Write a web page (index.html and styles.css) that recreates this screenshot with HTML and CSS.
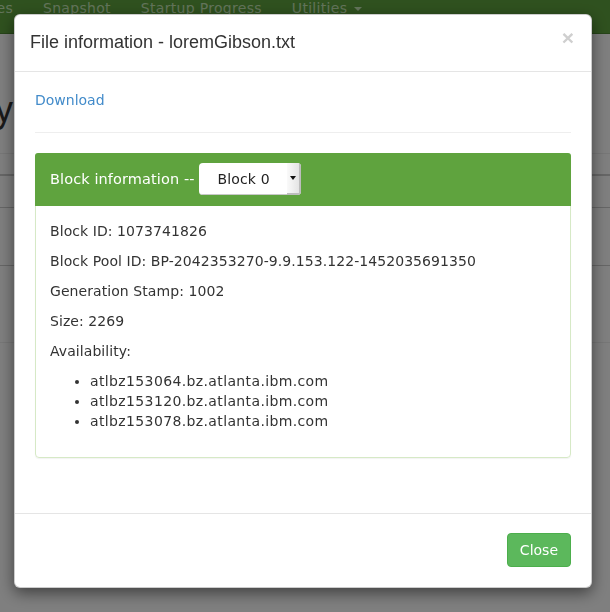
FILE: index.html
```html
<!DOCTYPE html>
<html>
<head>
<meta charset="utf-8">
<title>File information</title>
<link rel="stylesheet" href="styles.css">
</head>
<body>
<div class="page">
  <nav class="navbar">
    <div class="nav-clip"><a class="nav-link">Datanode Volume Failures</a></div>
    <a class="nav-link">Snapshot</a>
    <a class="nav-link">Startup Progress</a>
    <a class="nav-link">Utilities <span class="caret"></span></a>
  </nav>
  <div class="page-header">
    <div class="h1-clip"><h1>Browse Directory</h1></div>
  </div>
  <div class="bg-row row-a"></div>
  <div class="bg-row row-b"></div>
  <div class="bg-row row-c"></div>
  <div class="bg-row row-d"></div>
</div>

<div class="backdrop"></div>

<div class="modal">
  <div class="modal-header">
    <h4 class="modal-title">File information - loremGibson.txt</h4>
    <span class="close">&times;</span>
  </div>
  <div class="modal-body">
    <div class="download-row"><a class="link">Download</a></div>
    <hr class="sep">
    <div class="panel">
      <div class="panel-heading">
        <span class="panel-title">Block information --</span>
        <div class="select">
          <span class="select-text">Block 0</span>
          <span class="select-arrow"><span class="tri"></span></span>
        </div>
      </div>
      <div class="panel-body">
        <p>Block ID: 1073741826</p>
        <p>Block Pool ID: BP-2042353270-9.9.153.122-1452035691350</p>
        <p>Generation Stamp: 1002</p>
        <p>Size: 2269</p>
        <p>Availability:</p>
        <ul class="hosts">
          <li>atlbz153064.bz.atlanta.ibm.com</li>
          <li>atlbz153120.bz.atlanta.ibm.com</li>
          <li>atlbz153078.bz.atlanta.ibm.com</li>
        </ul>
      </div>
    </div>
  </div>
  <div class="modal-footer">
    <button class="btn-close">Close</button>
  </div>
</div>
</body>
</html>
```

FILE: styles.css
```css
* { box-sizing: border-box; }

html, body {
  margin: 0;
  padding: 0;
  background: #fff;
  font-family: "DejaVu Sans", sans-serif;
  font-size: 14px;
  line-height: 20px;
  color: #333;
  overflow: hidden;
  height: 612px;
}

.page {
  width: 610px;
}

.navbar {
  height: 34px;
  background: #5fa33e;
  display: flex;
  align-items: flex-start;
  border-bottom: 1px solid #4e8a32;
}

.nav-clip {
  width: 28px;
  display: flex;
  justify-content: flex-end;
  overflow: hidden;
  flex: none;
}

.nav-link {
  display: block;
  flex: none;
  white-space: nowrap;
  padding: 0 15px;
  line-height: 16px;
  color: #c6e8b6;
  font-size: 14px;
  letter-spacing: 0.3px;
}

.caret {
  display: inline-block;
  width: 0;
  height: 0;
  border-top: 4px solid #c6e8b6;
  border-left: 4px solid transparent;
  border-right: 4px solid transparent;
  vertical-align: middle;
  margin-left: 2px;
}

.page-header {
  margin-top: 56px;
  padding-bottom: 23px;
  border-bottom: 1px solid #eee;
}

.h1-clip {
  width: 13px;
  display: flex;
  justify-content: flex-end;
}

.h1-clip h1 {
  flex: none;
  margin: 0;
  white-space: nowrap;
  font-family: "Liberation Sans", Arial, sans-serif;
  font-weight: 500;
  font-size: 36px;
  line-height: 40px;
  color: #333;
}

.bg-row { width: 100%; }
.row-a { height: 22px; border-bottom: 2px solid #ccc; }
.row-b { height: 32px; border-bottom: 1px solid #ccc; }
.row-c { height: 58px; border-bottom: 1px solid #ccc; }
.row-d { height: 77px; border-bottom: 1px solid #eee; }

.backdrop {
  position: fixed;
  inset: 0;
  background: rgba(0, 0, 0, 0.5);
}

.modal {
  position: fixed;
  top: 14px;
  left: 14px;
  width: 578px;
  background: #fff;
  border: 1px solid rgba(0, 0, 0, 0.2);
  border-radius: 6px;
  box-shadow: 0 5px 15px rgba(0, 0, 0, 0.5);
}

.modal-header {
  display: flex;
  justify-content: space-between;
  align-items: flex-start;
  padding: 15px;
  border-bottom: 1px solid #e5e5e5;
}

.modal-title {
  margin: 0;
  font-family: "Liberation Sans", Arial, sans-serif;
  font-weight: 500;
  font-size: 18px;
  line-height: 25.7px;
  color: #333;
}

.close {
  font-family: "Liberation Sans", Arial, sans-serif;
  font-size: 21px;
  font-weight: bold;
  line-height: 1;
  color: #cfcfcf;
  margin-top: -3px;
  margin-right: 2px;
}

.modal-body {
  padding: 18px 20px 35px;
}

.download-row { line-height: 20px; }

.link {
  color: #428bca;
  text-decoration: none;
}

.sep {
  margin: 22px 0 20px;
  border: 0;
  border-top: 1px solid #eee;
  height: 0;
}

.panel {
  border: 1px solid #d6e9c6;
  border-radius: 4px;
  margin-bottom: 20px;
  box-shadow: 0 1px 1px rgba(0, 0, 0, 0.05);
}

.panel-heading {
  display: flex;
  align-items: center;
  background: #5fa33e;
  color: #fff;
  padding: 10px 15px;
  border-bottom: 1px solid #5fa33e;
  border-top-left-radius: 3px;
  border-top-right-radius: 3px;
  margin: -1px -1px 0;
}

.panel-title {
  font-size: 14.5px;
  margin-right: 4px;
  white-space: nowrap;
  letter-spacing: 0.1px;
}

.select {
  display: flex;
  width: 102px;
  height: 32px;
  background: #fff;
  border-radius: 4px;
  overflow: hidden;
  color: #222;
  box-shadow: inset -1px -1px 0 #c8c8c8;
}

.select-text {
  flex: 1;
  display: flex;
  align-items: center;
  justify-content: center;
  font-size: 14px;
  padding-left: 2px;
  letter-spacing: 0.15px;
}

.select-arrow {
  width: 14px;
  display: flex;
  align-items: center;
  justify-content: center;
  background: linear-gradient(to right, #fafafa, #e4e4e4);
  border-right: 2px solid #bdbdbd;
  border-bottom: 2px solid #bdbdbd;
}

.tri {
  width: 0;
  height: 0;
  border-top: 4px solid #111;
  border-left: 3px solid transparent;
  border-right: 3px solid transparent;
  margin-top: 1px;
}

.panel-body {
  padding: 15px 15px 16px 14px;
}

.panel-body p {
  margin: 0 0 10px;
  letter-spacing: 0.07px;
}

.hosts {
  margin: 0 0 10px;
  padding-left: 40px;
  letter-spacing: 0.37px;
}

.modal-footer {
  padding: 19px 20px 20px;
  border-top: 1px solid #e5e5e5;
  display: flex;
  justify-content: flex-end;
}

.btn-close {
  font-family: "DejaVu Sans", sans-serif;
  font-size: 14px;
  line-height: 20px;
  padding: 6px 12px;
  color: #fff;
  background: #5cb85c;
  border: 1px solid #4cae4c;
  border-radius: 4px;
}
```
